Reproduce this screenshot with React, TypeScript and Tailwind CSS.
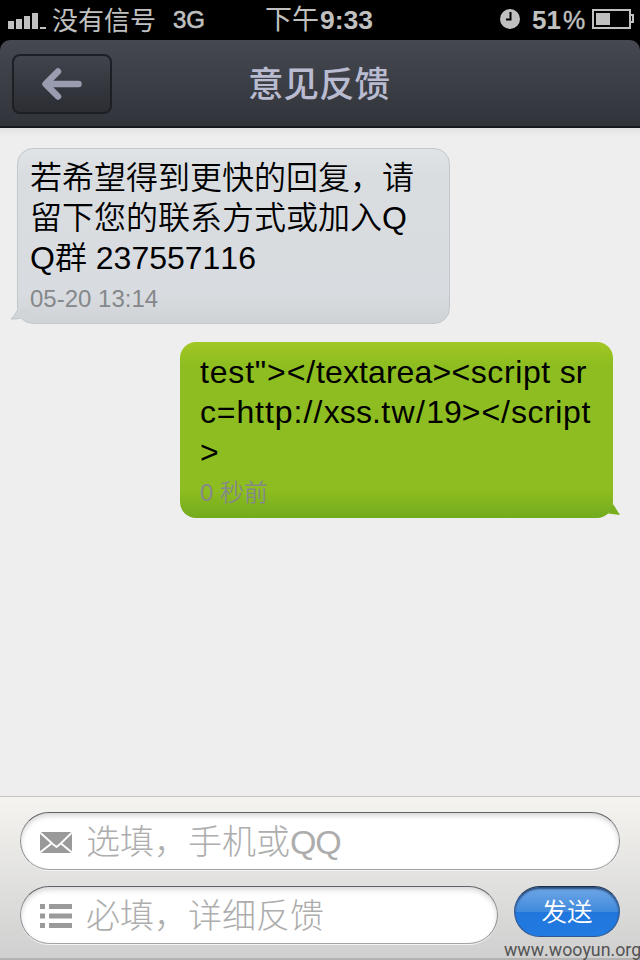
import React from "react";

const sans = "font-['Liberation_Sans','Noto_Sans_CJK_SC',sans-serif] [font-kerning:none]";

function Signal() {
  return (
    <svg className="ml-2 mt-[13px] block h-4 w-[38px] shrink-0" viewBox="0 0 38 16" fill="#c0c0c0">
      <rect x="0" y="8" width="6" height="8" />
      <rect x="8" y="6" width="6" height="10" />
      <rect x="16" y="3" width="6" height="13" />
      <rect x="24" y="0" width="6" height="16" />
      <rect x="32" y="14" width="6" height="2" />
    </svg>
  );
}

function Battery() {
  return (
    <svg className="ml-1.5 mt-[9px] block h-5 w-[42px] shrink-0" viewBox="0 0 42 20" fill="none" stroke="#c0c0c0" strokeWidth="2">
      <rect x="1" y="1" width="37" height="18" />
      <path d="M38 6h3v7h-3" />
      <rect x="4" y="4" width="14" height="12" fill="#c0c0c0" stroke="none" />
    </svg>
  );
}

function StatusBar() {
  return (
    <div className="flex h-10 items-start bg-black text-[#c0c0c0] whitespace-nowrap leading-10">
      <div className="flex w-[265px] items-start">
        <Signal />
        <span className="ml-1.5 pt-px text-[26px]">没有信号</span>
        <span className="ml-[17px] text-[24px] [-webkit-text-stroke:0.6px_#c0c0c0]">3G</span>
      </div>
      <div className="flex w-[235px] items-start">
        <span className="text-[27px]">下午</span>
        <span className="ml-px text-[26.500px] font-bold">9:33</span>
      </div>
      <svg className="mt-[9px] block h-5 w-5 shrink-0" viewBox="0 0 20 20">
        <circle cx="10" cy="10" r="10" fill="#c0c0c0" />
        <path d="M10.500 3v7.500H6" fill="none" stroke="#000" strokeWidth="2" />
      </svg>
      <span className="ml-3 text-[26px] font-bold">51</span>
      <span className="ml-[2px] w-[23px] text-[25px] [-webkit-text-stroke:0.4px_#c0c0c0]">%</span>
      <Battery />
    </div>
  );
}

function Header() {
  return (
    <div className="bg-black">
      <header className="flex h-[88px] items-start rounded-t-[10px] border-b-2 border-[#17191e] bg-linear-to-b from-[#454850] to-[#32343b]">
        <button className="ml-3 mt-[14px] flex h-[60px] w-[100px] items-center justify-center rounded-lg border-2 border-[#1d1f25] bg-linear-to-b from-[#41444c] to-[#2b2d33]">
          <svg className="h-[34px] w-[42px]" viewBox="0 0 42 34" fill="none" stroke="#9a9cb0" strokeWidth="6.500" strokeLinecap="round" strokeLinejoin="round">
            <path d="M37.500 17H5M17 4.500L4.500 17L17 29.500" />
          </svg>
        </button>
        <h1 className="ml-[136px] pt-[2px] text-[35.500px] font-medium leading-[86px] text-[#b9bbd0]">意见反馈</h1>
      </header>
    </div>
  );
}

function Messages() {
  return (
    <main className="flex h-[668px] flex-col bg-[#eeeeee] text-[32px] leading-10 text-black whitespace-nowrap shadow-[inset_0_8px_8px_-6px_#dedede]">
      <section className="relative ml-[17px] mt-5 h-[176px] w-[433px] rounded-[16px] border border-[#c3c7ca] bg-[linear-gradient(#e0e4e7,#d9dde0_25px,#d8dce0_145px,#cfd3d6)] pl-3 pt-[9px] font-[350]">
        <p>若希望得到更快的回复，请</p>
        <p>留下您的联系方式或加入Q</p>
        <p>Q群 237557116</p>
        <time className="block pt-px text-[24px] text-[#85888a]">05-20 13:14</time>
        <svg className="absolute -left-[8px] bottom-[1px] h-[14px] w-5" viewBox="0 0 20 14">
          <path d="M8 1C6 5 4 8 1 11c4 0 7 0 11-1l8 1V1z" fill="#d1d5d8" />
          <path d="M7.500 2C6 5 4 8 1 11c4 0 7 0 10-1" fill="none" stroke="#c3c7ca" />
        </svg>
      </section>
      <section className="relative ml-[180px] mt-[18px] h-[176px] w-[433px] rounded-[16px] bg-[linear-gradient(#a2c724,#8dbd20_24px,#8dbd20_148px,#73ab1d)] pl-5 pt-[10px]">
        <p>
          <span className="tracking-[0.82px]">test"</span>
          <span className="tracking-[0.93px]">&gt;&lt;/</span>
          <span className="tracking-[0.08px]">textarea</span>
          <span className="tracking-[0.5px]">&gt;&lt;</span>
          <span className="tracking-[0.6px]">script</span>
          <span> sr</span>
        </p>
        <p>
          <span className="tracking-[0.85px]">c=</span>
          <span className="tracking-[0.9px]">http</span>
          <span className="tracking-[1.2px]">://</span>
          <span className="tracking-[0.15px]">xss.</span>
          <span className="tracking-[1.4px]">tw/</span>
          <span>19</span>
          <span className="tracking-[0.93px]">&gt;&lt;/</span>
          <span className="tracking-[0.6px]">script</span>
        </p>
        <p>&gt;</p>
        <time className="block pt-[3px] text-[24px] font-[350] leading-9 text-[#85888a]">0 秒前</time>
        <svg className="absolute -right-[7px] bottom-[2px] h-3 w-3" viewBox="0 0 12 12">
          <path d="M5 0l7 11L0 9.500z" fill="#79ae1e" />
        </svg>
      </section>
    </main>
  );
}

const field =
  "flex h-[58px] items-center rounded-full border border-[#a5a5a5] border-t-[#616166] border-x-[#8c8c90] bg-white pl-[19px] text-[34px] font-light text-[#adadad] whitespace-nowrap shadow-[inset_0_3px_5px_#d9d9d9,0_1px_0_#f4f4f4]";

function Composer() {
  return (
    <footer className="h-[164px] border-t border-[#c8c5bd] bg-linear-to-b from-[#f5f4f0] to-[#cfcfcf] pl-5 pt-[15px] shadow-[inset_0_-2px_0_#b4b2b1]">
      <div className={`w-[600px] ${field}`}>
        <svg className="mt-0.5 mr-[14px] h-[21px] w-8" viewBox="0 0 32 21">
          <path fill="#9a9a9a" d="M0 0h32v21H0z" />
          <path fill="none" stroke="#fff" strokeWidth="1.900" d="M0 .5l12.500 11.300L16.500 15l4-3.200L32 .5M0 20.500l11.500-9M32 20.500l-11-9" />
        </svg>
        <span className="pt-0.5">选填，手机或<span className="tracking-[-1.200px]">QQ</span></span>
      </div>
      <div className="mt-4 flex items-start">
        <div className={`w-[478px] ${field}`}>
          <svg className="mt-0.5 mr-[14px] h-6 w-8" viewBox="0 0 32 24" fill="#9a9a9a">
            <path d="M0 0h5v5H0zM9 0h23v5H9zM0 9.500h5v5H0zM9 9.500h23v5H9zM0 19h5v5H0zM9 19h23v5H9z" />
          </svg>
          <span className="pt-0.5">必填，详细反馈</span>
        </div>
        <button className="ml-4 flex h-[51px] w-[106px] items-center justify-center rounded-full border border-[#31588d] border-t-[#202f48] bg-[linear-gradient(#70a7e6,#408add_50%,#2176dc_50%,#217be2)] pt-0.5 text-[25.500px] font-[350] text-white shadow-[inset_0_2px_2px_#294d7c]">
          发送
        </button>
      </div>
      <div className="-mt-[6px] ml-[484px] font-['Roboto',sans-serif] text-[17.800px] leading-6 text-[#535353] whitespace-nowrap">www.wooyun.org</div>
    </footer>
  );
}

export default function App() {
  return (
    <div className={`h-[960px] w-[640px] overflow-hidden ${sans}`}>
      <StatusBar />
      <Header />
      <Messages />
      <Composer />
    </div>
  );
}
